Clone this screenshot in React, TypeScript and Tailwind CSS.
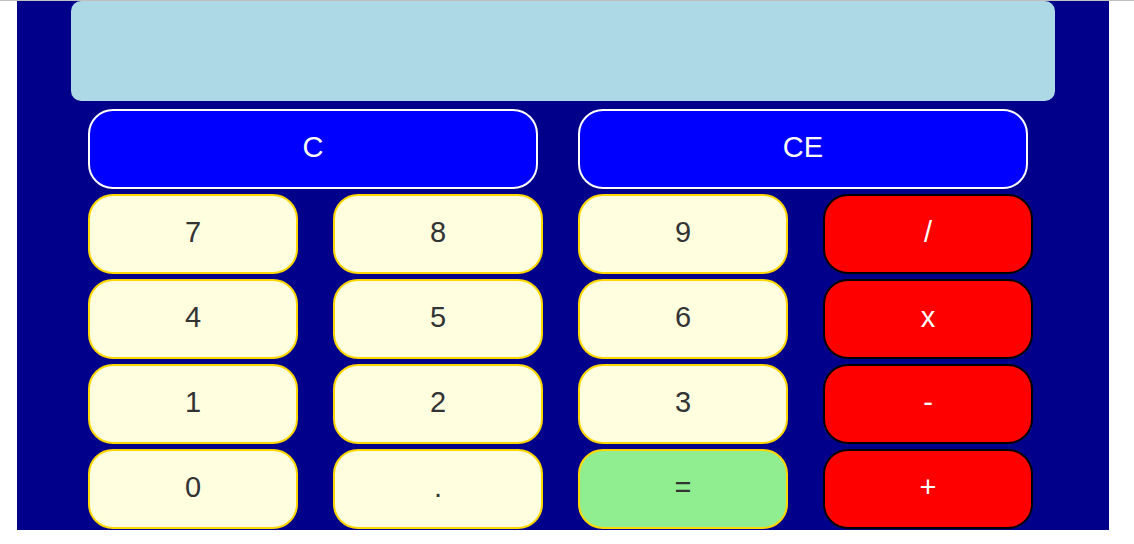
import React from "react";

type Btn = { label: string; kind: "num" | "op" | "eq" };

const rows: Btn[][] = [
  [
    { label: "7", kind: "num" },
    { label: "8", kind: "num" },
    { label: "9", kind: "num" },
    { label: "/", kind: "op" },
  ],
  [
    { label: "4", kind: "num" },
    { label: "5", kind: "num" },
    { label: "6", kind: "num" },
    { label: "x", kind: "op" },
  ],
  [
    { label: "1", kind: "num" },
    { label: "2", kind: "num" },
    { label: "3", kind: "num" },
    { label: "-", kind: "op" },
  ],
  [
    { label: "0", kind: "num" },
    { label: ".", kind: "num" },
    { label: "=", kind: "eq" },
    { label: "+", kind: "op" },
  ],
];

const kindClass: Record<Btn["kind"], string> = {
  num: "bg-[#ffffe0] border-[#ffd700] text-[#333333]",
  op: "bg-[#ff0000] border-black text-white",
  eq: "bg-[#90ee90] border-[#ffd700] text-[#333333]",
};

export default function App() {
  return (
    <div
      className="w-[1134px] h-[544px] bg-white"
      style={{ fontFamily: '"Liberation Sans", Arial, sans-serif' }}
    >
      <div className="h-px bg-[#c0c0c0]" />
      <div className="ml-[17px] w-[1092px] h-[529px] bg-[#00008b] flex flex-col">
        <div className="ml-[54px] w-[984px] h-[100px] rounded-[10px] bg-[#add8e6]" />
        <div className="mt-[8px] ml-[71px] flex gap-[40px]">
          <button className="w-[450px] h-[80px] pb-[4px] rounded-[25px] border-2 border-white bg-[#0000ff] text-white text-[29px] flex items-center justify-center leading-none">
            C
          </button>
          <button className="w-[450px] h-[80px] pb-[4px] rounded-[25px] border-2 border-white bg-[#0000ff] text-white text-[29px] flex items-center justify-center leading-none">
            CE
          </button>
        </div>
        <div className="mt-[5px] ml-[71px] flex flex-col gap-[5px]">
          {rows.map((row, i) => (
            <div key={i} className="flex gap-[35px]">
              {row.map((b) => (
                <button
                  key={b.label}
                  className={`w-[210px] h-[80px] pb-[4px] rounded-[25px] border-2 text-[29px] leading-none flex items-center justify-center ${kindClass[b.kind]}`}
                >
                  {b.label}
                </button>
              ))}
            </div>
          ))}
        </div>
      </div>
    </div>
  );
}
